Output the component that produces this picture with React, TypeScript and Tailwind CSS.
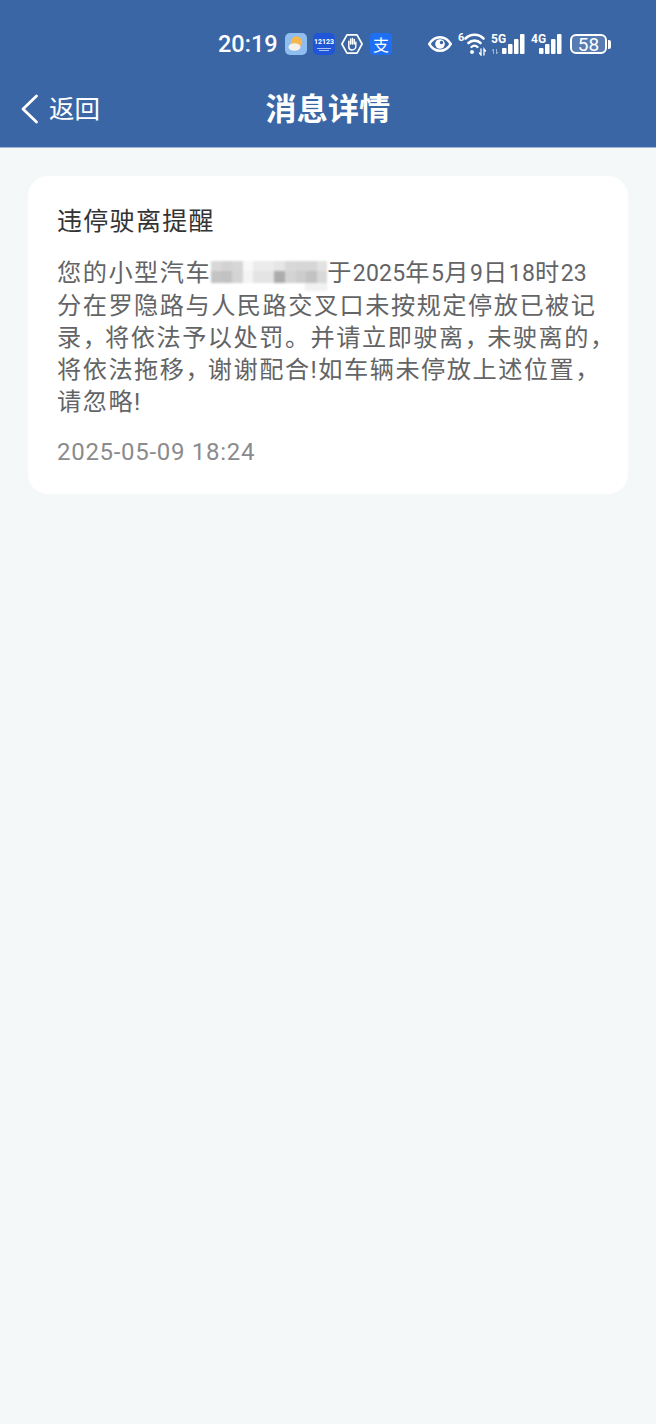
const cjk = "font-['Roboto','Noto_Sans_CJK_SC',sans-serif]";

// mosaic over the plate number
const plateTop = ["#d8d8d8", "#d2d2d2", "#d6d6d6", "#f8f8f8", "#ececec", "#ececec", "#e6e6e6", "#d8d8d8", "#d6d6d6", "#d6d6d6", "#e2e2e2"];
const plateBottom = ["#c4c4c4", "#c2c2c2", "#d4d4d4", "#f4f4f4", "#e4e4e4", "#e4e4e4", "#acacac", "#d4d4d4", "#cccccc", "#c2c2c2", "#d8d8d8"];

const Plate = () => (
  <span className="relative inline-block w-[116px] h-0 align-baseline">
    <span className="absolute left-0 top-[-20px] flex flex-col w-[116px] blur-[1px]">
      <span className="flex h-[10px]">
        {plateTop.map((c, i) => (
          <span key={i} className="flex-1" style={{ background: c }} />
        ))}
      </span>
      <span className="flex h-[12px]">
        {plateBottom.map((c, i) => (
          <span key={i} className="flex-1" style={{ background: c }} />
        ))}
      </span>
      <span className="self-end w-[22px] h-[8px] bg-[#f1f1f1]" />
    </span>
  </span>
);

// wide punctuation in the reference font is a bit narrower than a full em
const Comma = () => <span className="tracking-[-1.800px]">，</span>;
const Num = ({ children }: { children: string }) => <span className="text-[23px] tracking-[0.200px]">{children}</span>;

const Bars = ({ label, dim, box }: { label: string; dim?: boolean; box: string }) => (
  <div className="relative w-[31px] h-[24px]">
    <span className="absolute left-0 top-[1px] text-[12px] leading-[12px] font-bold font-['Roboto',sans-serif]">{label}</span>
    <svg width="34" height="24" viewBox={box} className="absolute inset-0" fill="#fff">
      {dim && <path d="M2.500 22v-5l-1.500 2M5.500 17v5l1.500-2" fill="none" stroke="#9db3d3" strokeWidth="1" />}
      <rect x="11" y="16" width="4.500" height="6" rx="1" />
      <rect x="17" y="12" width="4.500" height="10" rx="1" />
      <rect x="23" y="7" width="4.500" height="15" rx="1" />
      <rect x="29" y="2" width="4.500" height="20" rx="1" />
    </svg>
  </div>
);

const StatusBar = () => (
  <div className="flex items-center h-[60px] pt-[28px] pl-[218px] text-white">
    <span className="w-[60px] text-[23.500px] leading-[30px] font-medium font-['Roboto',sans-serif]">20:19</span>
    <div className="flex items-center ml-[7px]">
      {/* weather */}
      <svg width="22" height="22" viewBox="0 0 22 22">
        <rect width="22" height="22" rx="5" fill="#8fbdf0" />
        <circle cx="11.500" cy="9" r="5.800" fill="#f6b84e" />
        <ellipse cx="9.500" cy="14" rx="6" ry="3.800" fill="#f5f1ea" />
      </svg>
      {/* 12123 */}
      <div className="flex flex-col items-center w-[22px] h-[22px] ml-[6px] rounded-[5px] bg-[#1f55d6] pt-[5px]">
        <span className="text-[7px] leading-[8px] font-bold font-['Roboto',sans-serif]">12123</span>
        <span className="w-[14px] h-[1px] mt-[2px] bg-[#a9c2f5]" />
        <span className="w-[10px] h-[1px] mt-[1px] bg-[#a9c2f5]" />
      </div>
      {/* hand in hexagon */}
      <svg width="22" height="22" viewBox="0 0 24 24" fill="none" stroke="#fff" className="ml-[6px]">
        <path d="M6.500 2h11L23 12l-5.500 10h-11L1 12z" strokeWidth="1.800" strokeLinejoin="round" />
        <path d="M8.500 12V9M10.500 12V6.500M12.500 12V6M14.500 12V7M16.200 13.500V10M8.500 12v3c0 2 1.500 3.500 3.500 3.500s4.200-1.500 4.200-4" strokeWidth="1.600" strokeLinecap="round" />
      </svg>
      {/* alipay */}
      <div className="flex items-center justify-center w-[22px] h-[22px] ml-[7px] rounded-[4px] bg-[#1f6ff2] text-[16px] leading-none font-['Noto_Sans_CJK_SC',sans-serif]">支</div>
    </div>
    <div className="flex items-center ml-[36px]">
      {/* eye */}
      <svg width="24" height="16" viewBox="0 0 24 16">
        <path d="M1.200 8C4 3.500 7.800 1.200 12 1.200S20 3.500 22.800 8C20 12.500 16.200 14.800 12 14.800S4 12.500 1.200 8z" fill="none" stroke="#fff" strokeWidth="2.400" />
        <circle cx="12" cy="8" r="4.800" fill="#fff" />
        <circle cx="13.500" cy="6.500" r="1.700" fill="#3b66a5" />
      </svg>
      {/* wifi */}
      <div className="relative w-[29px] h-[24px] ml-[6px]">
        <span className="absolute left-0 top-[0px] text-[11px] leading-[11px] font-bold font-['Roboto',sans-serif]">6</span>
        <svg width="29" height="24" viewBox="0 0 29 24" className="absolute inset-0" fill="none" stroke="#fff" strokeLinecap="round">
          <path d="M7.500 6.500c5-5 13-5 18 0" strokeWidth="2.600" />
          <path d="M10.500 11c3.200-3.200 8.800-3.200 12 0" strokeWidth="2.600" />
          <path d="M13.500 15c1.700-1.600 4.300-1.600 6 0" strokeWidth="2.400" />
          <circle cx="14" cy="20" r="1.700" fill="#fff" strokeWidth="0.500" />
          <path d="M23 17v6l-1.500-2M26 23v-6l1.500 2" strokeWidth="1.300" />
        </svg>
      </div>
      <div className="ml-[4px] mr-[3px]"><Bars label="5G" dim box="0 0 34 24" /></div>
      <div className="ml-[6px]"><Bars label="4G" box="3 0 34 24" /></div>
      {/* battery */}
      <div className="flex items-center ml-[8px]">
        <div className="flex items-center justify-center w-[37px] h-[20px] rounded-[6px] border-[2px] border-white text-[19px] leading-none bg-[#ffffff26] font-['Roboto',sans-serif]">58</div>
        <div className="w-[3px] h-[9px] ml-[1px] rounded-r-[2px] bg-white" />
      </div>
    </div>
  </div>
);

const Header = () => (
  <div className="flex items-center relative h-[88px] pt-[10px] text-white">
    <div className="flex items-center pl-[21px]">
      <svg width="18" height="30" viewBox="0 0 18 30" fill="none" stroke="#fff" strokeWidth="2.800" strokeLinecap="round" strokeLinejoin="round">
        <path d="M15.500 2 2 15l13.500 13" />
      </svg>
      <span className={`${cjk} ml-[10px] text-[25.500px] leading-[32px]`}>返回</span>
    </div>
    <h1 className={`${cjk} absolute left-0 right-0 mt-[2px] text-center text-[31px] tracking-[0.300px] leading-[38px] font-bold`}>消息详情</h1>
  </div>
);

export default function App() {
  return (
    <div className={`${cjk} min-h-[1424px] w-[656px] bg-[#f4f8f9]`}>
      <div className="bg-[#3b66a5] h-[148px] border-b border-[#9fb6d4]">
        <StatusBar />
        <Header />
      </div>
      <div className="px-[28px] pt-[28px]">
        <div className="bg-white rounded-[20px] h-[318px] px-[29px] pt-[29px]">
          <h2 className="text-[25px] tracking-[1.300px] leading-[34px] text-[#333333]">违停驶离提醒</h2>
          <p className="mt-[18px] text-[24.200px] tracking-[1.500px] leading-[32px] text-[#636466] whitespace-nowrap">
            <span className="block">
              您的小型汽车
              <Plate />
              于<Num>2025</Num>年<Num>5</Num>月<Num>9</Num>日<Num>18</Num>时<Num>23</Num>
            </span>
            <span className="block">分在罗隐路与人民路交叉口未按规定停放已被记</span>
            <span className="block">
              录<Comma />将依法予以处罚。并请立即驶离<Comma />未驶离的<Comma />
            </span>
            <span className="block">
              将依法拖移<Comma />谢谢配合!如车辆未停放上述位置<Comma />
            </span>
            <span className="block">请忽略!</span>
          </p>
          <p className="mt-[18px] text-[24px] tracking-[0.700px] leading-[32px] text-[#8a8b8e]">2025-05-09 18:24</p>
        </div>
      </div>
    </div>
  );
}
